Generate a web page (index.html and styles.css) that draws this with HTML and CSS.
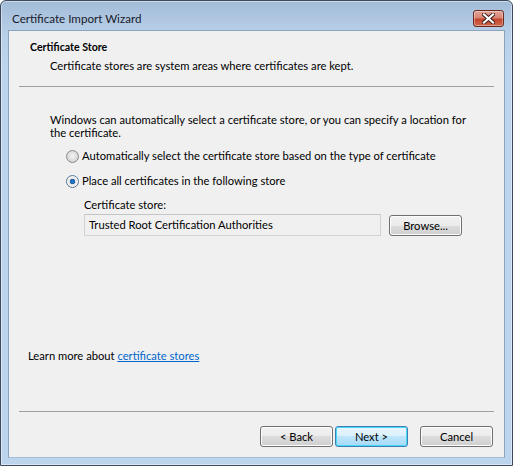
FILE: index.html
```html
<!DOCTYPE html>
<html>
<head>
<meta charset="utf-8">
<link rel="stylesheet" href="styles.css">
</head>
<body>
<div class="window">
  <div class="titlebar">
    <span class="title">Certificate Import Wizard</span>
    <button class="close" aria-label="Close">
      <svg width="13" height="11" viewBox="0 0 13 11">
        <path d="M2 1.5 L11 9.5 M11 1.5 L2 9.5" stroke="#3a1a14" stroke-width="4" stroke-linecap="square"/>
        <path d="M2 1.5 L11 9.5 M11 1.5 L2 9.5" stroke="#ffffff" stroke-width="2.2" stroke-linecap="square"/>
      </svg>
    </button>
  </div>
  <div class="client">
    <div class="header">
      <div class="h-title">Certificate Store</div>
      <div class="h-desc">Certificate stores are system areas where certificates are kept.</div>
    </div>
    <div class="sep"></div>
    <div class="body">
      <p class="intro">Windows can automatically select a certificate store, or you can specify a location for<br>the certificate.</p>
      <div class="radio"><span class="rb"></span><span>Automatically select the certificate store based on the type of certificate</span></div>
      <div class="radio second"><span class="rb checked"></span><span>Place all certificates in the following store</span></div>
      <div class="store">
        <div class="store-label">Certificate store:</div>
        <div class="store-row">
          <div class="field">Trusted Root Certification Authorities</div>
          <button class="btn">Browse...</button>
        </div>
      </div>
      <div class="learn">Learn more about <a href="#" class="link">certificate stores</a></div>
    </div>
    <div class="sep"></div>
    <div class="footer">
      <button class="btn">&lt; Back</button>
      <button class="btn default">Next &gt;</button>
      <button class="btn cancel">Cancel</button>
    </div>
  </div>
</div>
</body>
</html>
```

FILE: styles.css
```css
* { box-sizing: border-box; }
html, body { margin: 0; padding: 0; background: #ffffff; }
body {
  font-family: Lato, "Noto Sans", sans-serif;
  font-size: 11.2px;
  color: #000;
}
.window {
  width: 513px;
  height: 466px;
  display: flex;
  flex-direction: column;
  border: 1px solid #3b4a5c;
  border-radius: 6px 6px 0 0;
  background: linear-gradient(to bottom, #a2bbd7 0px, #b7cee7 30px, #bcd4ec 60px, #bcd4ec 100%);
  padding: 0 7px 7px 7px;
  box-shadow: inset 0 0 0 1px rgba(255,255,255,0.45);
}
.titlebar {
  height: 29px;
  display: flex;
  align-items: flex-start;
  justify-content: space-between;
}
.title {
  margin-top: 10px;
  margin-left: 4px;
  font-size: 11.6px;
  line-height: 16px;
  color: #1a1a2a;
}
.close {
  margin-top: 9px;
  margin-right: 1px;
  width: 31px;
  height: 17px;
  padding: 0;
  border: 1px solid #6c2a1f;
  border-radius: 3px;
  background: linear-gradient(to bottom, #e3a598 0%, #d88474 45%, #c5432d 55%, #cf6a4c 100%);
  box-shadow: inset 0 0 0 1px rgba(255,255,255,0.35);
  display: flex;
  align-items: center;
  justify-content: center;
}
.client {
  flex: 1;
  background: #f0f0f0;
  display: flex;
  flex-direction: column;
  border: 1px solid #8aa3bf;
  border-bottom-color: #a7bdd6;
}
.header { padding: 8px 0 0 21px; }
.h-title { font-weight: bold; line-height: 16px; font-size: 10.6px; }
.h-desc { margin: 3px 0 0 20px; line-height: 16px; }
.sep {
  height: 1px;
  margin: 12px 10px 0 10px;
  background: #a0a0a0;
}
.body {
  flex: 1;
  display: flex;
  flex-direction: column;
  padding: 0 0 35px 0;
}
.intro {
  margin: 26px 0 0 41px;
  line-height: 13px;
  white-space: nowrap;
}
.radio {
  display: flex;
  align-items: center;
  margin: 9px 0 0 57px;
  line-height: 16px;
}
.rb {
  width: 13px;
  height: 13px;
  border-radius: 50%;
  border: 1px solid #8b8b8b;
  background: radial-gradient(circle at 50% 45%, #f4f4f4 0, #dcdcdc 55%, #c8c8c8 100%);
  margin-right: 3px;
  flex: none;
}
.rb.checked {
  border-color: #5a7a98;
  background: radial-gradient(circle at 50% 50%, #2d7fcf 0, #1c5fa8 2.5px, #e2e2e2 3px, #f6f6f6 5px, #cfcfcf 100%);
}
.store { margin: 8px 0 0 75px; }
.store-label { line-height: 16px; }
.store-row {
  display: flex;
  align-items: center;
  margin-top: 1px;
  gap: 8px;
}
.field {
  width: 297px;
  height: 22px;
  border: 1px solid #d3d3d3;
  border-top-color: #c5c5c5;
  background: #f0f0f0;
  padding: 2px 4px;
  line-height: 16px;
}
.btn {
  font-family: inherit;
  font-size: 11.2px;
  color: #000;
  width: 73px;
  height: 21px;
  padding: 0;
  border: 1px solid #707070;
  border-radius: 3px;
  background: linear-gradient(to bottom, #f2f2f2 0%, #ebebeb 50%, #dddddd 50%, #cfcfcf 100%);
  box-shadow: inset 0 0 0 1px #fcfcfc;
  line-height: 17px;
}
.btn.default {
  border-color: #3c7fb1;
  background: linear-gradient(to bottom, #eaf6fd 0%, #d9f0fc 50%, #bee6fd 50%, #a7d9f5 100%);
  box-shadow: inset 0 0 0 1px #48d8fb;
}
.learn {
  margin: auto 0 0 19px;
  line-height: 16px;
}
.link { color: #0066cc; text-decoration: underline; }
.footer {
  display: flex;
  justify-content: flex-end;
  gap: 2px;
  padding: 14px 11px 10px 0;
}
.btn.cancel { margin-left: 10px; }
```
